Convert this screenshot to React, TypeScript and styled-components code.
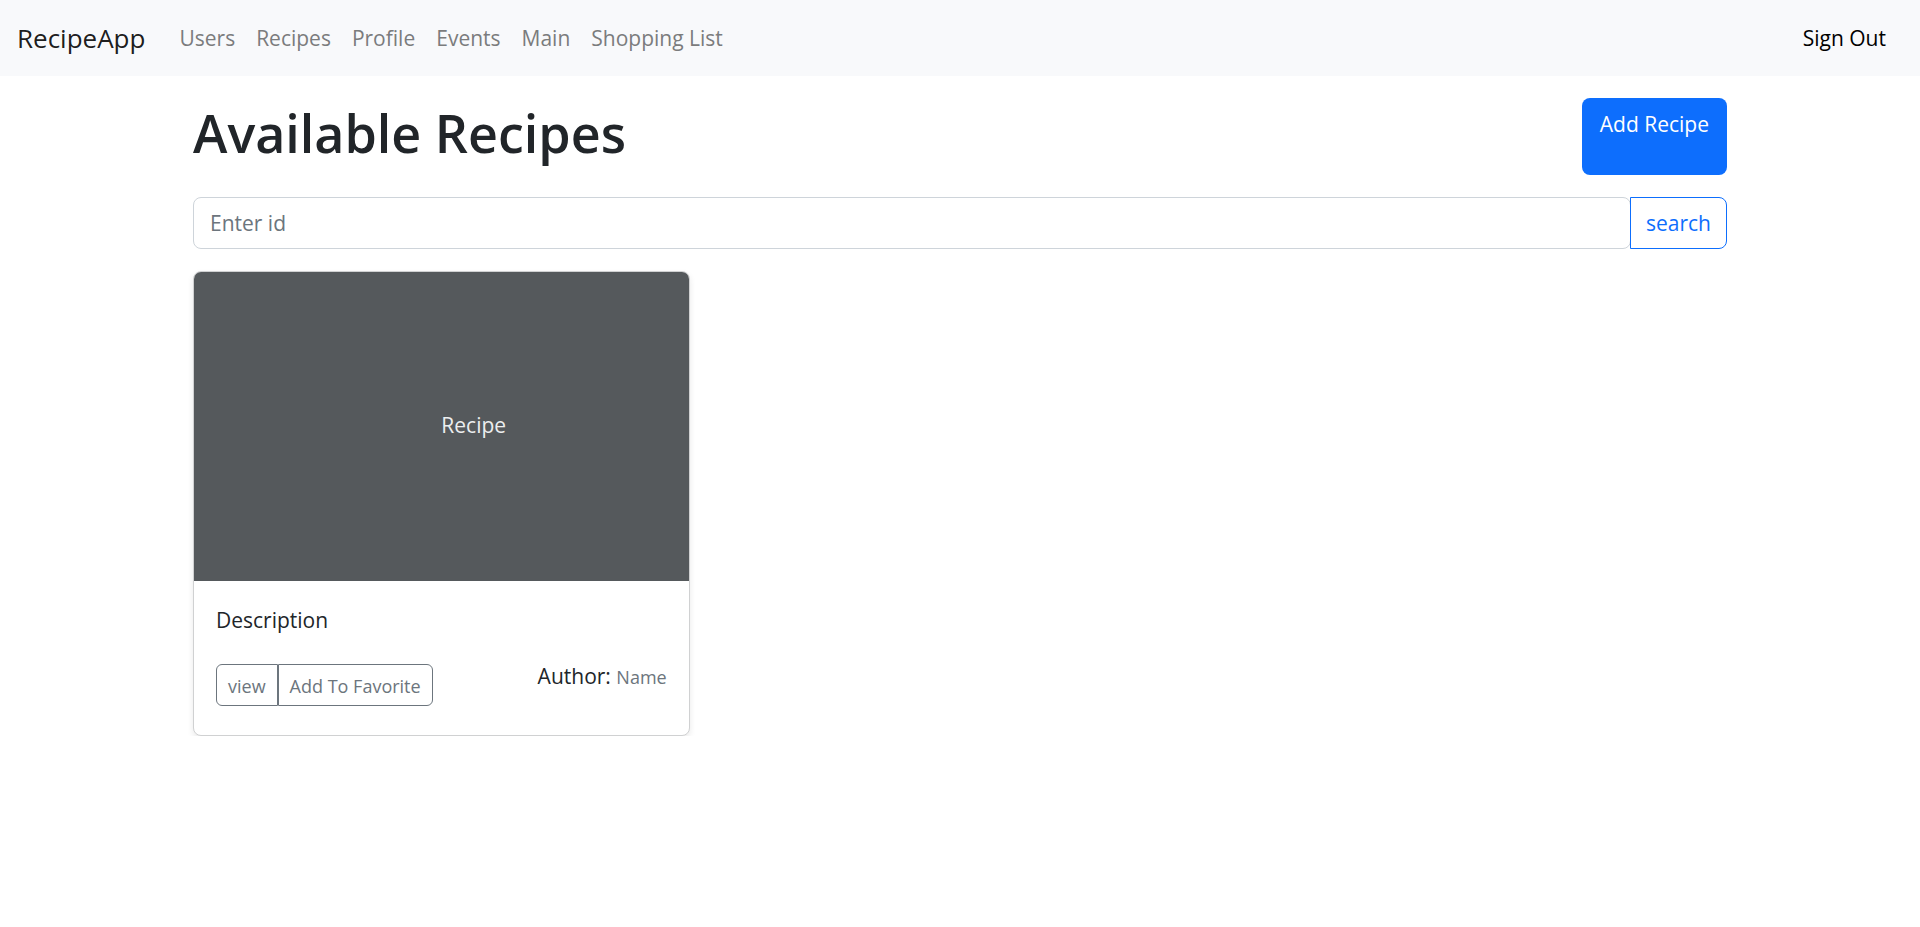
import React from "react";
import styled, { createGlobalStyle } from "styled-components";

const GlobalStyle = createGlobalStyle`
  *, *::before, *::after { box-sizing: border-box; }
  body {
    margin: 0;
    background: #fff;
    color: #212529;
    font-family: "Segoe UI", "Open Sans", "Noto Sans", sans-serif;
    font-size: 21px;
    line-height: 34px;
  }
  button, input { font: inherit; }
  a { text-decoration: none; }
`;

const Navbar = styled.nav`
  display: flex;
  align-items: center;
  min-height: 76px;
  padding: 0 34px 0 17px;
  background: #f8f9fb;
`;

const Brand = styled.a`
  margin-right: 34px;
  color: rgba(0, 0, 0, 0.9);
  font-size: 26px;
`;

const NavList = styled.ul`
  display: flex;
  flex: 1;
  gap: 21px;
  margin: 0;
  padding: 0;
  list-style: none;
`;

const NavLink = styled.a<{ $dark?: boolean }>`
  color: ${({ $dark }) => ($dark ? "#000" : "#7b7c7d")};
`;

const Container = styled.main`
  max-width: 1534px;
  margin: 0 auto;
`;

const Header = styled.header`
  display: flex;
  justify-content: space-between;
  margin: 22px 0;
`;

const Title = styled.h1`
  margin: 0;
  font-size: 52px;
  font-weight: 600;
  line-height: 70px;
`;

const AddLink = styled.a`
  min-height: 77px;
  padding: 9px 18px;
  border-radius: 8px;
  background: #0d6efd;
  color: #fff;
`;

const SearchForm = styled.form`
  display: flex;
  margin-bottom: 22px;
`;

const SearchInput = styled.input`
  flex: 1;
  min-width: 0;
  height: 52px;
  padding: 0 16px;
  border: 1px solid #ced4da;
  border-radius: 8px;
  background: #fff;
  color: #212529;
  &::placeholder { color: #6c757d; opacity: 1; }
`;

const SearchButton = styled.button`
  margin-left: -1px;
  padding: 0 15px;
  border: 1px solid #0d6efd;
  border-radius: 0 8px 8px 0;
  background: #fff;
  color: #0d6efd;
`;

const CardGrid = styled.section`
  display: grid;
  grid-template-columns: repeat(3, 1fr);
  gap: 22px;
`;

const Card = styled.article`
  overflow: hidden;
  border: 1px solid #d0d1d2;
  border-radius: 8px;
  background: #fff;
  box-shadow: 0 3px 6px rgba(0, 0, 0, 0.09);
`;

const Cover = styled.div`
  display: flex;
  align-items: center;
  height: 309px;
  padding: 0 0 4px 50%;
  background: #55595c;
  color: #eceeef;
`;

const CardBody = styled.div`
  padding: 22px;
`;

const Description = styled.p`
  margin: 0 0 22px;
`;

const CardFooter = styled.div`
  display: flex;
  justify-content: space-between;
  align-items: flex-start;
`;

const ButtonGroup = styled.div`
  display: flex;
  margin: 5px 0 7px;
`;

const SmallButton = styled.button`
  height: 42px;
  padding: 2px 11px 0;
  border: 1px solid #6c757d;
  background: #fff;
  color: #6c757d;
  font-size: 18px;
  line-height: 28px;
  &:first-child { border-radius: 6px 0 0 6px; }
  &:last-child { border-radius: 0 6px 6px 0; }
`;

const AuthorName = styled.small`
  color: #6c757d;
  font-size: 18px;
`;

const links = ["Users", "Recipes", "Profile", "Events", "Main", "Shopping List"];

export default function App() {
  return (
    <>
      <GlobalStyle />
      <Navbar>
        <Brand href="#">RecipeApp</Brand>
        <NavList>
          {links.map((label) => (
            <li key={label}>
              <NavLink href="#">{label}</NavLink>
            </li>
          ))}
        </NavList>
        <NavLink href="#" $dark>Sign Out</NavLink>
      </Navbar>
      <Container>
        <Header>
          <Title>Available Recipes</Title>
          <AddLink href="#">Add Recipe</AddLink>
        </Header>
        <SearchForm onSubmit={(e) => e.preventDefault()}>
          <SearchInput type="text" placeholder="Enter id" aria-label="Recipe id" />
          <SearchButton type="submit">search</SearchButton>
        </SearchForm>
        <CardGrid>
          <Card>
            <Cover>Recipe</Cover>
            <CardBody>
              <Description>Description</Description>
              <CardFooter>
                <ButtonGroup role="group">
                  <SmallButton type="button">view</SmallButton>
                  <SmallButton type="button">Add To Favorite</SmallButton>
                </ButtonGroup>
                <div>
                  Author: <AuthorName>Name</AuthorName>
                </div>
              </CardFooter>
            </CardBody>
          </Card>
        </CardGrid>
      </Container>
    </>
  );
}
